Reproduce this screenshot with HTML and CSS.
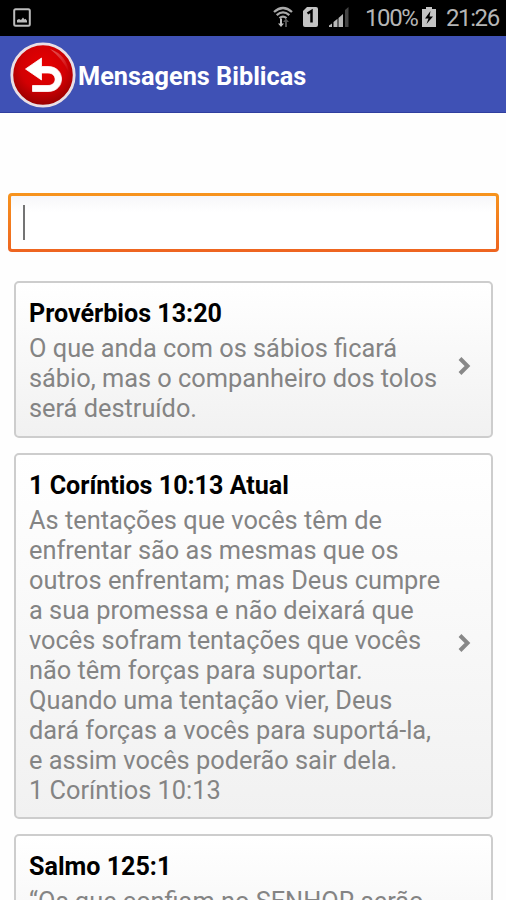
FILE: index.html
```html
<!DOCTYPE html>
<html lang="pt-BR">
<head>
<meta charset="utf-8">
<title>Mensagens Biblicas</title>
<link rel="stylesheet" href="styles.css">
</head>
<body>
<div class="status">
  <svg class="picture" width="18" height="19" viewBox="0 0 18 19"><rect x="1.2" y="1.2" width="15.6" height="16.6" rx="1.5" fill="none" stroke="#bcbcbc" stroke-width="2"/><path d="M4 14.500V12l2-1 2 1 2-2.500 1.500 2 1-.8 1.500 2v1.800z" fill="#bcbcbc"/></svg>
  <svg class="wifi" width="20" height="22" viewBox="0 0 20 22"><g fill="none" stroke="#a9a9a9" stroke-width="2.300"><path d="M1 6Q10-2 19 6M3.700 9.200Q10 3.600 16.300 9.200M6.500 12.200Q10 9 13.500 12.200"/></g><path d="M7 12.500h2v5h2L8 21l-3-3.500h2z" fill="#c4c4c4"/><path d="M12 21h2v-5h2l-3-3.500-3 3.500h2z" fill="#555"/></svg>
  <svg class="sim" width="15" height="20" viewBox="0 0 15 20"><path d="M4 0h9q2 0 2 2v16q0 2-2 2H2q-2 0-2-2V4z" fill="#c4c4c4"/><path d="M4.500 6.500L8.500 4v11.500" fill="none" stroke="#000" stroke-width="2.500"/></svg>
  <svg class="signal" width="20" height="20" viewBox="0 0 20 20"><path d="M0 20v-1.500l3-2V20zM4.500 20v-5l4-3.200V20zM9.500 20v-9l4.500-4v13z" fill="#b8b8b8"/><path d="M16 20V3l3.500-3v20z" fill="#444"/></svg>
  <span class="percent">100%</span>
  <svg class="battery" width="14" height="20" viewBox="0 0 14 20"><path d="M4 0h6v2h4v18H0V2h4z" fill="#c4c4c4"/><path d="M8.500 4L3 11.500h3.500L4.500 17l6.500-7.500H7.500z" fill="#000"/></svg>
  <span class="clock">21:26</span>
</div>
<header class="bar">
  <svg class="back" width="66" height="66" viewBox="0 0 66 66">
    <defs><radialGradient id="red" cx=".5" cy=".38" r=".65"><stop offset="0" stop-color="#e80000"/><stop offset=".55" stop-color="#d20003"/><stop offset="1" stop-color="#8c0000"/></radialGradient>
    <linearGradient id="shine" x1="0" y1="0" x2="1" y2="1"><stop offset="0" stop-color="#fff" stop-opacity=".35"/><stop offset="1" stop-color="#fff" stop-opacity="0"/></linearGradient></defs>
    <circle cx="33" cy="33" r="31.200" fill="url(#red)" stroke="#e9dfe5" stroke-width="2.800"/>
    <path d="M40 7Q57 13 59 31Q53 17 40 7z" fill="url(#shine)"/>
    <path d="M15.500 27L31.500 16V24.500H38C56 24.500 56 49.500 38 49.500H22.500V43.500H38C47.500 43.500 47.500 31 38 31H31.500V38z" fill="#fff" stroke="#fff" stroke-width=".8" stroke-linejoin="round"/>
  </svg>
  <h1>Mensagens Biblicas</h1>
</header>
<main>
  <div class="search"><span class="caret"></span></div>
  <div class="card short">
    <div class="text"><h2>Provérbios 13:20</h2>
    <p>O que anda com os sábios ficará<br>sábio, mas o companheiro dos tolos<br>será destruído.</p></div>
    <svg class="chevron" width="13" height="20" viewBox="0 0 13 20"><path d="M2 2.500L9.500 10 2 17.500" fill="none" stroke="#888" stroke-width="4"/></svg>
  </div>
  <div class="card tall">
    <div class="text"><h2>1 Coríntios 10:13 Atual</h2>
    <p>As tentações que vocês têm de<br>enfrentar são as mesmas que os<br>outros enfrentam; mas Deus cumpre<br>a sua promessa e não deixará que<br>vocês sofram tentações que vocês<br>não têm forças para suportar.<br>Quando uma tentação vier, Deus<br>dará forças a vocês para suportá-la,<br>e assim vocês poderão sair dela.<br>1 Coríntios 10:13</p></div>
    <svg class="chevron" width="13" height="20" viewBox="0 0 13 20"><path d="M2 2.500L9.500 10 2 17.500" fill="none" stroke="#888" stroke-width="4"/></svg>
  </div>
  <div class="card last">
    <div class="text"><h2>Salmo 125:1</h2>
    <p>“Os que confiam no SENHOR serão</p></div>
  </div>
</main>
</body>
</html>
```
FILE: styles.css
```css
* { box-sizing: border-box; }
body {
  margin: 0;
  height: 900px;
  overflow: hidden;
  background: #fefefe;
  font-family: Roboto, "Liberation Sans", sans-serif;
}
h1, h2, p { margin: 0; white-space: nowrap; }
svg { display: block; flex: none; }
.status {
  height: 36px;
  display: flex;
  align-items: center;
  padding: 0 7px 0 13px;
  background: #000;
  color: #b5b5b5;
  font-size: 24px;
  line-height: 36px;
}
.picture { margin: -1px auto 0 0; }
.wifi { margin: -2px 10px 0 0; }
.sim { margin: -2px 11px 0 0; }
.signal { margin: -2px 16px 0 0; }
.percent { width: 52px; margin-right: 5px; letter-spacing: -1.4px; }
.battery { margin: -2px 10px 0 0; }
.clock { width: 53px; letter-spacing: -1.4px; }
.bar {
  height: 77px;
  display: flex;
  align-items: center;
  padding: 1px 0 0 9.500px;
  background: #3f51b5;
  border-bottom: 1px solid #303f9f;
}
h1 {
  margin: 4px 0 0 2.500px;
  color: #fff;
  font-size: 25.300px;
  line-height: 32px;
  font-weight: 700;
}
main { padding: 80px 13px 0 14px; }
.search {
  height: 59px;
  margin: 0 -6px 29px;
  padding: 9px 12px;
  border: 3px solid transparent;
  border-radius: 4px;
  background: linear-gradient(#f7f7f9, #fff 30%) padding-box, linear-gradient(#f7941d, #ee6420) border-box;
}
.caret { display: block; width: 2px; height: 35px; background: #747474; }
.card {
  display: flex;
  align-items: flex-start;
  margin-bottom: 15px;
  padding: 16px 20px 0 13px;
  border: 2px solid #cdcdcd;
  border-radius: 5px;
  background: linear-gradient(#fff, #f1f1f1);
}
.short { height: 157px; }
.tall { height: 366px; }
.text { flex: 1; }
h2 {
  color: #000;
  font-size: 25.100px;
  line-height: 30px;
  font-weight: 700;
  margin-bottom: 4px;
}
p {
  color: #848484;
  font-size: 25.350px;
  line-height: 30px;
}
.chevron { align-self: center; margin-top: -3px; }
.last { height: 66px; border-bottom: 0; border-radius: 5px 5px 0 0; background: linear-gradient(#fff, #f9f9f9); }
```
